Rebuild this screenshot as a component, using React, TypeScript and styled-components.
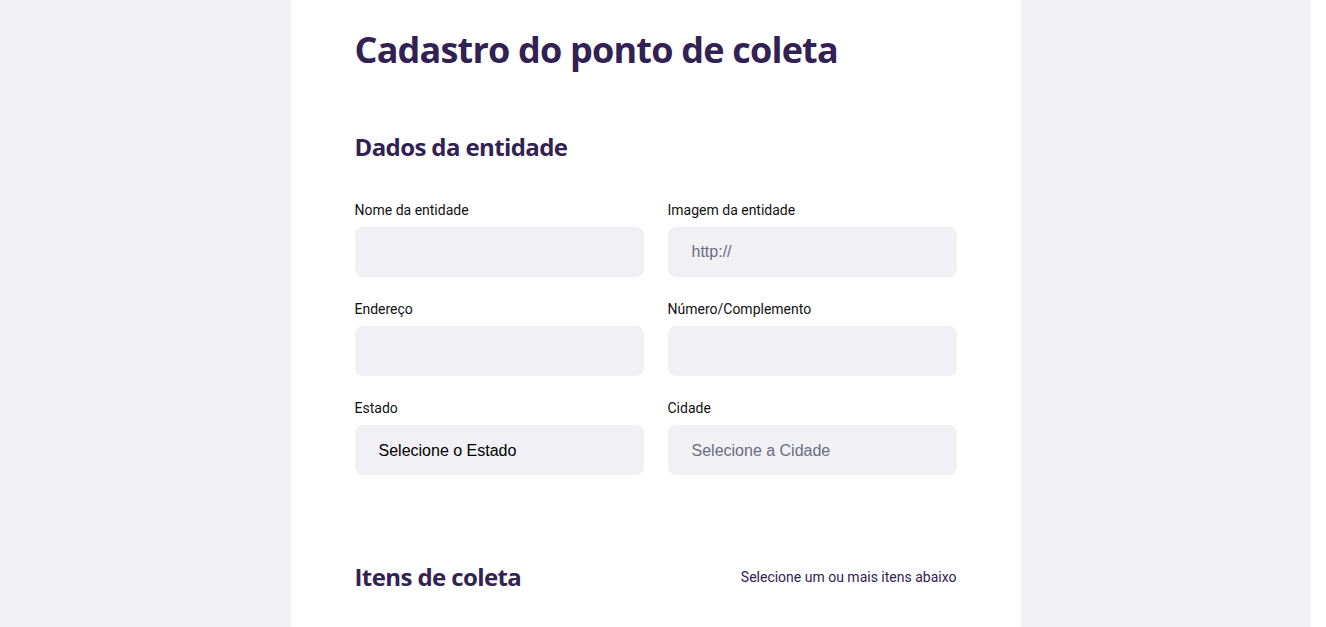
import React from "react";
import styled, { createGlobalStyle } from "styled-components";

const GlobalStyle = createGlobalStyle`
  * { box-sizing: border-box; }
  html, body { margin: 0; padding: 0; overflow: hidden; height: 100%; }
  body {
    background: #f0f0f5;
    font-family: Roboto, "Liberation Sans", sans-serif;
    color: #322153;
  }
`;

const Page = styled.div`
  height: 627px;
  background: #f0f0f5;
  border-right: 15px solid #ffffff;
  overflow: hidden;
`;

const Form = styled.form`
  width: 730px;
  margin: 0 auto;
  padding: 24px 64px 64px;
  background: #ffffff;
  min-height: 627px;
`;

const Title = styled.h1`
  margin: 0;
  font-family: "Open Sans", "Noto Sans", sans-serif;
  font-weight: 700;
  font-size: 36px;
  line-height: 52px;
  letter-spacing: -0.8px;
  color: #322153;
`;

const Fieldset = styled.fieldset<{ $top: number }>`
  margin: ${(p) => p.$top}px 0 0;
  padding: 0;
  border: 0;
  min-inline-size: auto;
`;

const Legend = styled.legend`
  width: 100%;
  padding: 0;
  display: flex;
  align-items: center;
  justify-content: space-between;
  margin-bottom: 39px;
`;

const SectionTitle = styled.h2`
  margin: 0;
  font-family: "Open Sans", "Noto Sans", sans-serif;
  font-weight: 700;
  font-size: 24px;
  line-height: 32px;
  letter-spacing: -0.6px;
  color: #322153;
`;

const Hint = styled.span`
  font-size: 14px;
  font-weight: 400;
  color: #322153;
`;

const Row = styled.div`
  display: grid;
  grid-template-columns: 1fr 1fr;
  column-gap: 24px;
`;

const Field = styled.div`
  display: flex;
  flex-direction: column;
  margin-bottom: 24px;
`;

const Label = styled.label`
  font-size: 14px;
  line-height: 17px;
  margin-bottom: 8px;
  color: #111111;
`;

const Input = styled.input`
  height: 50px;
  background: #f0f0f5;
  border: 0;
  border-radius: 8px;
  padding: 0 24px;
  font-family: "Liberation Sans", Arial, sans-serif;
  font-size: 16px;
  color: #6c6c80;
  outline: none;
  &::placeholder { color: #6c6c80; }
`;

const Select = styled.select`
  height: 50px;
  background: #f0f0f5;
  border: 0;
  border-radius: 8px;
  padding: 0 24px;
  font-family: "Liberation Sans", Arial, sans-serif;
  font-size: 16px;
  color: #000000;
  appearance: none;
  outline: none;
  &:disabled { color: #6c6c80; opacity: 1; }
`;

export default function App() {
  return (
    <>
      <GlobalStyle />
      <Page>
        <Form onSubmit={(e) => e.preventDefault()}>
          <Title>Cadastro do ponto de coleta</Title>

          <Fieldset $top={55}>
            <Legend>
              <SectionTitle>Dados da entidade</SectionTitle>
            </Legend>
            <Row>
              <Field>
                <Label htmlFor="name">Nome da entidade</Label>
                <Input id="name" type="text" />
              </Field>
              <Field>
                <Label htmlFor="image">Imagem da entidade</Label>
                <Input id="image" type="url" placeholder="http://" />
              </Field>
            </Row>
            <Row>
              <Field>
                <Label htmlFor="address">Endereço</Label>
                <Input id="address" type="text" />
              </Field>
              <Field>
                <Label htmlFor="address2">Número/Complemento</Label>
                <Input id="address2" type="text" />
              </Field>
            </Row>
            <Row>
              <Field>
                <Label htmlFor="uf">Estado</Label>
                <Select id="uf" defaultValue="">
                  <option value="">Selecione o Estado</option>
                </Select>
              </Field>
              <Field>
                <Label htmlFor="city">Cidade</Label>
                <Select id="city" disabled defaultValue="">
                  <option value="">Selecione a Cidade</option>
                </Select>
              </Field>
            </Row>
          </Fieldset>

          <Fieldset $top={62}>
            <Legend>
              <SectionTitle>Itens de coleta</SectionTitle>
              <Hint>Selecione um ou mais itens abaixo</Hint>
            </Legend>
          </Fieldset>
        </Form>
      </Page>
    </>
  );
}
